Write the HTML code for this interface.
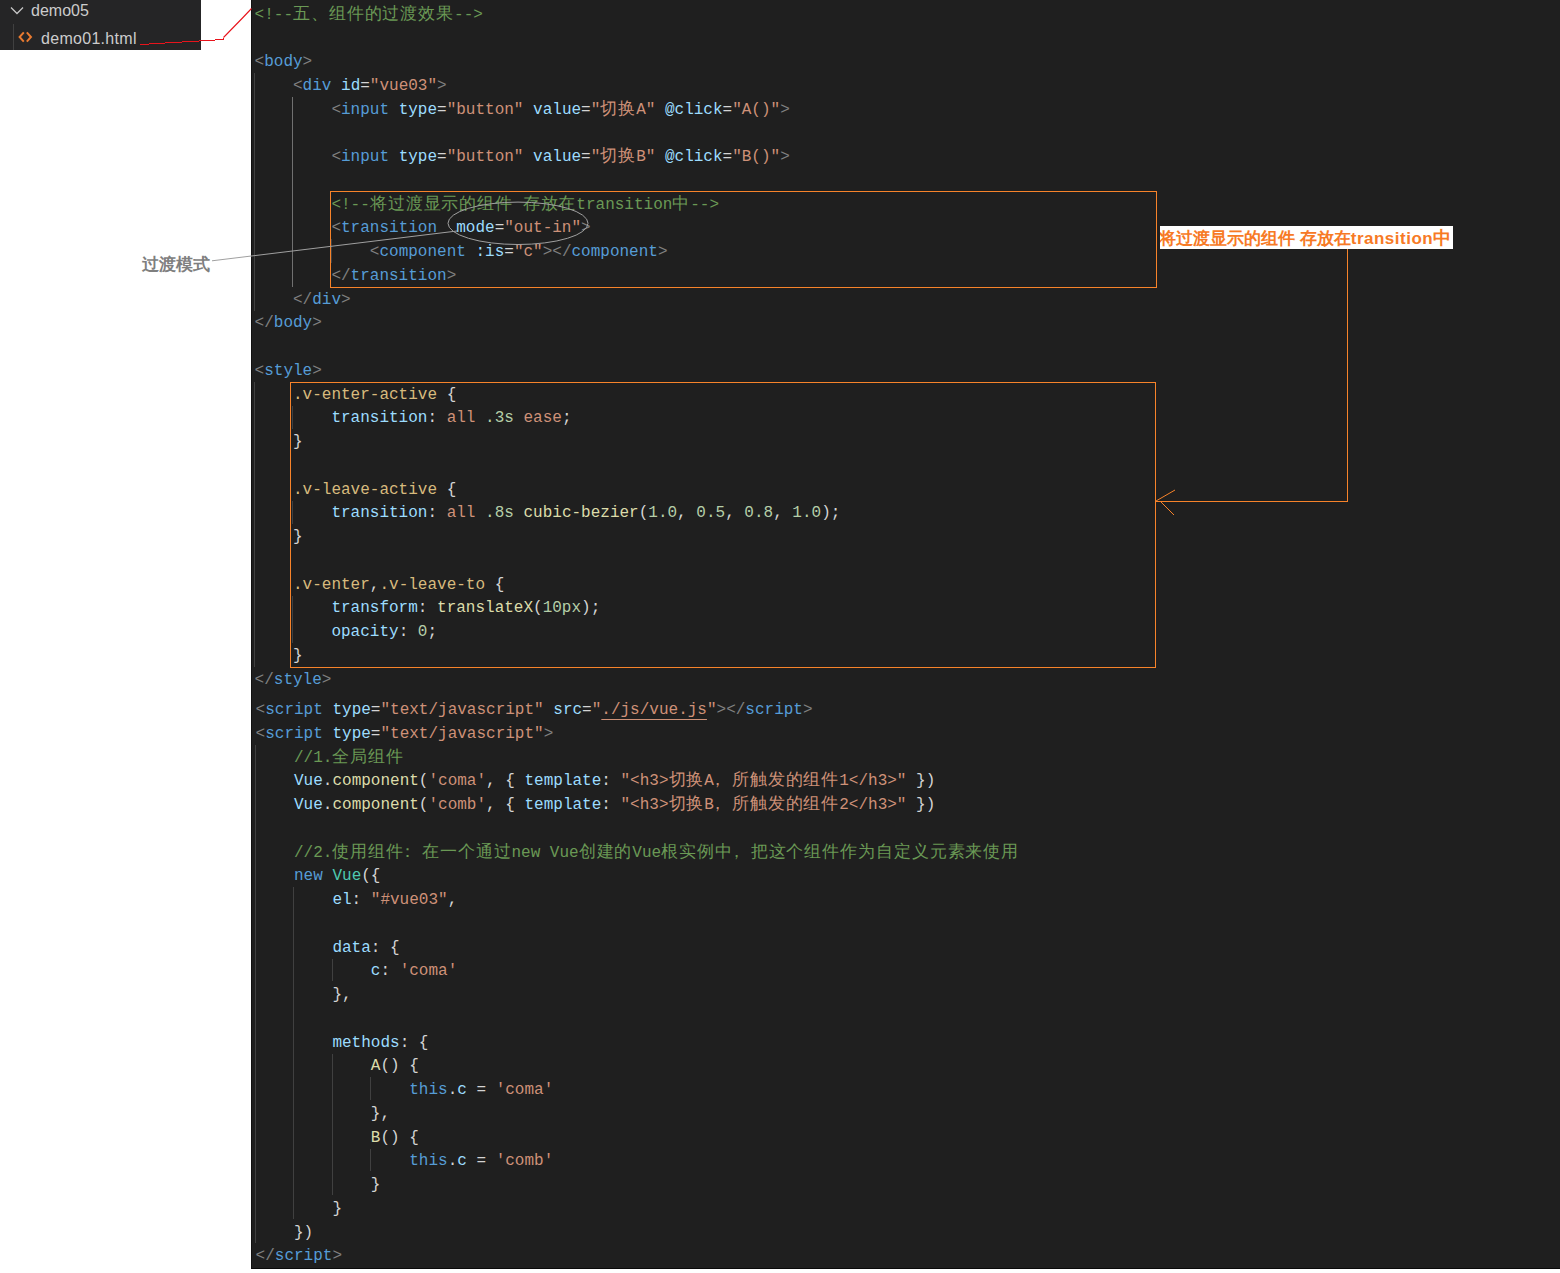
<!DOCTYPE html>
<html><head><meta charset="utf-8">
<style>
html,body{margin:0;padding:0;background:#fff;width:1560px;height:1273px;overflow:hidden;position:relative}
#side{position:absolute;left:0;top:0;width:201px;height:50px;background:#252526;font-family:"Liberation Sans",sans-serif;font-size:16px;color:#cccccc}
#side .t1{position:absolute;left:31px;top:1px;line-height:20px;letter-spacing:0px}
#side .t2{position:absolute;left:41px;top:29px;line-height:20px;letter-spacing:0.3px}
#side .tg{position:absolute;left:13px;top:24px;width:1px;height:26px;background:#404040}
#ed{position:absolute;left:251px;top:0;width:1309px;height:1268px;background:#1f1f1f;border-left:1px solid #111;border-bottom:1px solid #0a0a0a}
.ln{position:absolute;left:254.6px;height:20px;line-height:20px;white-space:pre;font-family:"Liberation Mono",monospace;font-size:16px;color:#d4d4d4}
.ln b{font-weight:normal}
.fp{text-decoration:none;position:relative;left:-5px}
.ln i{font-style:normal;font-size:17px;letter-spacing:0.9px}
.p{color:#808080}.t{color:#569cd6}.a{color:#9cdcfe}.s{color:#ce9178}.w{color:#d4d4d4}.c{color:#6a9955}
.e{color:#d7ba7d}.n{color:#b5cea8}.f{color:#dcdcaa}.y{color:#4ec9b0}.u{color:#ce9178;text-decoration:underline;text-underline-offset:5px}
.g{position:absolute;width:1px;background:#404040}
.g.act{background:#707070}
#lbl1{position:absolute;left:142px;top:255px;font-family:"Liberation Sans",sans-serif;font-weight:bold;font-size:17px;color:#7f7f7f;line-height:20px;white-space:nowrap}
#lbl2{position:absolute;left:1160px;top:226px;width:293px;height:23px;background:#fff;overflow:hidden}
#lbl2 span{position:absolute;left:-1px;top:2px;font-family:"Liberation Sans",sans-serif;font-weight:bold;font-size:17px;color:#f77a25;line-height:20px;white-space:nowrap}
.box{position:absolute;border:1px solid #f7832a}
svg{position:absolute;left:0;top:0}
</style></head><body>
<div id="side">
<svg width="40" height="50" style="left:0;top:0"><polyline points="11,7.5 17,13.5 23,7.5" fill="none" stroke="#c5c5c5" stroke-width="1.3"/>
<polyline points="23.8,32.3 19.6,37 23.8,41.7" fill="none" stroke="#e87a30" stroke-width="2"/><polyline points="26.8,32.3 31,37 26.8,41.7" fill="none" stroke="#e87a30" stroke-width="2"/></svg>
<div class="tg"></div>
<div class="t1">demo05</div>
<div class="t2">demo01.html</div>
</div>
<div id="ed"></div>
<div class="g" style="left:254px;top:73.0px;height:237.5px"></div>
<div class="g act" style="left:292px;top:96.8px;height:190.0px"></div>
<div class="g" style="left:331px;top:239.2px;height:23.8px"></div>
<div class="g" style="left:254px;top:381.8px;height:285.0px"></div>
<div class="g" style="left:292px;top:405.5px;height:23.8px"></div>
<div class="g" style="left:292px;top:500.5px;height:23.8px"></div>
<div class="g" style="left:292px;top:595.5px;height:47.5px"></div>
<div class="g" style="left:255px;top:744.8px;height:497.8px"></div>
<div class="g" style="left:293px;top:887.2px;height:331.5px"></div>
<div class="g" style="left:332px;top:958.5px;height:22.8px"></div>
<div class="g" style="left:332px;top:1053.5px;height:141.5px"></div>
<div class="g" style="left:370px;top:1077.2px;height:22.8px"></div>
<div class="g" style="left:370px;top:1148.5px;height:22.8px"></div>
<div class="ln" style="top:5px;left:254.6px"><b class="c">&lt;!--<i>五、组件的过渡效果</i>--&gt;</b></div>
<div class="ln" style="top:52px;left:254.6px"><b class="p">&lt;</b><b class="t">body</b><b class="p">&gt;</b></div>
<div class="ln" style="top:76px;left:254.6px">    <b class="p">&lt;</b><b class="t">div</b> <b class="a">id</b><b class="w">=</b><b class="s">&quot;vue03&quot;</b><b class="p">&gt;</b></div>
<div class="ln" style="top:100px;left:254.6px">        <b class="p">&lt;</b><b class="t">input</b> <b class="a">type</b><b class="w">=</b><b class="s">&quot;button&quot;</b> <b class="a">value</b><b class="w">=</b><b class="s">&quot;<i>切换</i>A&quot;</b> <b class="a">@click</b><b class="w">=</b><b class="s">&quot;A()&quot;</b><b class="p">&gt;</b></div>
<div class="ln" style="top:147px;left:254.6px">        <b class="p">&lt;</b><b class="t">input</b> <b class="a">type</b><b class="w">=</b><b class="s">&quot;button&quot;</b> <b class="a">value</b><b class="w">=</b><b class="s">&quot;<i>切换</i>B&quot;</b> <b class="a">@click</b><b class="w">=</b><b class="s">&quot;B()&quot;</b><b class="p">&gt;</b></div>
<div class="ln" style="top:195px;left:254.6px">        <b class="c">&lt;!--<i>将过渡显示的组件</i> <i>存放在</i>transition<i>中</i>--&gt;</b></div>
<div class="ln" style="top:218px;left:254.6px">        <b class="p">&lt;</b><b class="t">transition</b>  <b class="a">mode</b><b class="w">=</b><b class="s">&quot;out-in&quot;</b><b class="p">&gt;</b></div>
<div class="ln" style="top:242px;left:254.6px">            <b class="p">&lt;</b><b class="t">component</b> <b class="a">:is</b><b class="w">=</b><b class="s">&quot;c&quot;</b><b class="p">&gt;&lt;/</b><b class="t">component</b><b class="p">&gt;</b></div>
<div class="ln" style="top:266px;left:254.6px">        <b class="p">&lt;/</b><b class="t">transition</b><b class="p">&gt;</b></div>
<div class="ln" style="top:290px;left:254.6px">    <b class="p">&lt;/</b><b class="t">div</b><b class="p">&gt;</b></div>
<div class="ln" style="top:313px;left:254.6px"><b class="p">&lt;/</b><b class="t">body</b><b class="p">&gt;</b></div>
<div class="ln" style="top:361px;left:254.6px"><b class="p">&lt;</b><b class="t">style</b><b class="p">&gt;</b></div>
<div class="ln" style="top:385px;left:254.6px">    <b class="e">.v-enter-active</b><b class="w"> {</b></div>
<div class="ln" style="top:408px;left:254.6px">        <b class="a">transition</b><b class="w">: </b><b class="s">all</b> <b class="n">.3s</b> <b class="s">ease</b><b class="w">;</b></div>
<div class="ln" style="top:432px;left:254.6px">    <b class="w">}</b></div>
<div class="ln" style="top:480px;left:254.6px">    <b class="e">.v-leave-active</b><b class="w"> {</b></div>
<div class="ln" style="top:503px;left:254.6px">        <b class="a">transition</b><b class="w">: </b><b class="s">all</b> <b class="n">.8s</b> <b class="f">cubic-bezier</b><b class="w">(</b><b class="n">1.0</b><b class="w">, </b><b class="n">0.5</b><b class="w">, </b><b class="n">0.8</b><b class="w">, </b><b class="n">1.0</b><b class="w">);</b></div>
<div class="ln" style="top:527px;left:254.6px">    <b class="w">}</b></div>
<div class="ln" style="top:575px;left:254.6px">    <b class="e">.v-enter</b><b class="w">,</b><b class="e">.v-leave-to</b><b class="w"> {</b></div>
<div class="ln" style="top:598px;left:254.6px">        <b class="a">transform</b><b class="w">: </b><b class="f">translateX</b><b class="w">(</b><b class="n">10px</b><b class="w">);</b></div>
<div class="ln" style="top:622px;left:254.6px">        <b class="a">opacity</b><b class="w">: </b><b class="n">0</b><b class="w">;</b></div>
<div class="ln" style="top:646px;left:254.6px">    <b class="w">}</b></div>
<div class="ln" style="top:670px;left:254.6px"><b class="p">&lt;/</b><b class="t">style</b><b class="p">&gt;</b></div>
<div class="ln" style="top:700px;left:255.6px"><b class="p">&lt;</b><b class="t">script</b> <b class="a">type</b><b class="w">=</b><b class="s">&quot;text/javascript&quot;</b> <b class="a">src</b><b class="w">=</b><b class="s">&quot;</b><b class="u">./js/vue.js</b><b class="s">&quot;</b><b class="p">&gt;&lt;/</b><b class="t">script</b><b class="p">&gt;</b></div>
<div class="ln" style="top:724px;left:255.6px"><b class="p">&lt;</b><b class="t">script</b> <b class="a">type</b><b class="w">=</b><b class="s">&quot;text/javascript&quot;</b><b class="p">&gt;</b></div>
<div class="ln" style="top:748px;left:255.6px">    <b class="c">//1.<i>全局组件</i></b></div>
<div class="ln" style="top:771px;left:255.6px">    <b class="a">Vue</b><b class="w">.</b><b class="f">component</b><b class="w">(</b><b class="s">&#x27;coma&#x27;</b><b class="w">, { </b><b class="a">template</b><b class="w">: </b><b class="s">&quot;&lt;h3&gt;<i>切换</i>A<i><u class="fp">，</u>所触发的组件</i>1&lt;/h3&gt;&quot;</b><b class="w"> })</b></div>
<div class="ln" style="top:795px;left:255.6px">    <b class="a">Vue</b><b class="w">.</b><b class="f">component</b><b class="w">(</b><b class="s">&#x27;comb&#x27;</b><b class="w">, { </b><b class="a">template</b><b class="w">: </b><b class="s">&quot;&lt;h3&gt;<i>切换</i>B<i><u class="fp">，</u>所触发的组件</i>2&lt;/h3&gt;&quot;</b><b class="w"> })</b></div>
<div class="ln" style="top:843px;left:255.6px">    <b class="c">//2.<i>使用组件<u class="fp">：</u>在一个通过</i>new Vue<i>创建的</i>Vue<i>根实例中<u class="fp">，</u>把这个组件作为自定义元素来使用</i></b></div>
<div class="ln" style="top:866px;left:255.6px">    <b class="t">new</b> <b class="y">Vue</b><b class="w">({</b></div>
<div class="ln" style="top:890px;left:255.6px">        <b class="a">el</b><b class="w">: </b><b class="s">&quot;#vue03&quot;</b><b class="w">,</b></div>
<div class="ln" style="top:938px;left:255.6px">        <b class="a">data</b><b class="w">: {</b></div>
<div class="ln" style="top:961px;left:255.6px">            <b class="a">c</b><b class="w">: </b><b class="s">&#x27;coma&#x27;</b></div>
<div class="ln" style="top:985px;left:255.6px">        <b class="w">},</b></div>
<div class="ln" style="top:1033px;left:255.6px">        <b class="a">methods</b><b class="w">: {</b></div>
<div class="ln" style="top:1056px;left:255.6px">            <b class="f">A</b><b class="w">() {</b></div>
<div class="ln" style="top:1080px;left:255.6px">                <b class="t">this</b><b class="w">.</b><b class="a">c</b><b class="w"> = </b><b class="s">&#x27;coma&#x27;</b></div>
<div class="ln" style="top:1104px;left:255.6px">            <b class="w">},</b></div>
<div class="ln" style="top:1128px;left:255.6px">            <b class="f">B</b><b class="w">() {</b></div>
<div class="ln" style="top:1151px;left:255.6px">                <b class="t">this</b><b class="w">.</b><b class="a">c</b><b class="w"> = </b><b class="s">&#x27;comb&#x27;</b></div>
<div class="ln" style="top:1175px;left:255.6px">            <b class="w">}</b></div>
<div class="ln" style="top:1199px;left:255.6px">        <b class="w">}</b></div>
<div class="ln" style="top:1223px;left:255.6px">    <b class="w">})</b></div>
<div class="ln" style="top:1246px;left:255.6px"><b class="p">&lt;/</b><b class="t">script</b><b class="p">&gt;</b></div>
<div class="box" style="left:330px;top:191px;width:825px;height:95px"></div>
<div class="box" style="left:290px;top:382px;width:864px;height:284px"></div>
<div id="lbl1">过渡模式</div>
<div id="lbl2"><span>将过渡显示的组件 存放在<b style="letter-spacing:0.5px">transition</b><b style="font-size:18px">中</b></span></div>
<svg width="1560" height="1273">
<path d="M140,44.5H149M149,43.5H165M165,42.5H182M182,41.5H199M199,40.5H215M215,39.5H223.5V37.5" fill="none" stroke="#e8141c" stroke-width="1" shape-rendering="crispEdges"/><polyline points="223.5,37.5 242.5,18 251.5,8.5" fill="none" stroke="#e8141c" stroke-width="1.1"/>
<ellipse cx="518" cy="223.3" rx="70" ry="21.2" fill="none" stroke="#a0a0a0" stroke-width="1"/>
<line x1="212" y1="260.8" x2="457" y2="231" stroke="#a0a0a0" stroke-width="1"/>
<polyline points="1347.5,249 1347.5,502" fill="none" stroke="#f7832a" stroke-width="1"/>
<polyline points="1347,501.5 1156,501.5" fill="none" stroke="#f7832a" stroke-width="1"/>
<polyline points="1175,490 1156,501" fill="none" stroke="#f7832a" stroke-width="1"/>
<polyline points="1161,502 1174,515" fill="none" stroke="#f7832a" stroke-width="1"/>
</svg>
</body></html>
